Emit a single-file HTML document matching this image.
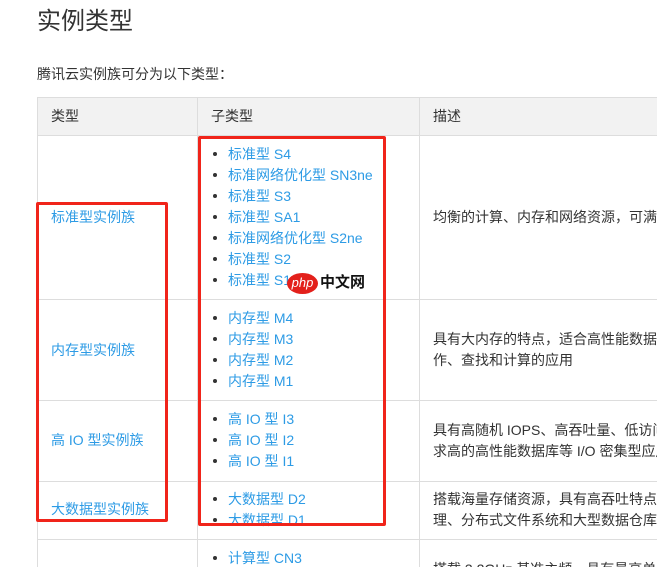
<!DOCTYPE html>
<html><head><meta charset="utf-8"><style>
html{overflow:hidden;width:657px;height:567px}
body{margin:0;width:657px;height:567px;overflow:hidden;background:#fff;font-family:"Liberation Sans","Noto Sans CJK SC",sans-serif;position:relative}
.t{position:absolute;white-space:nowrap;font-size:14px;line-height:16px;transform:translateY(-8px)}
.l{color:#2d9be5}
.d{color:#333}
.b{position:absolute;width:4px;height:4px;border-radius:50%;background:#333}
.hl{position:absolute;height:1px;background:#ddd}
.vl{position:absolute;width:1px;background:#ddd}
.rb{position:absolute;border:3px solid #f0241a;border-radius:2px}
.clip{position:absolute;left:420px;top:0;width:237px;height:567px;overflow:hidden}
.clip .t{left:13px}
</style></head><body>
<div class="t d" style="left:37px;top:22px;font-size:24px;line-height:30px;transform:translateY(-15px)">实例类型</div>
<div class="t d" style="left:37px;top:74px">腾讯云实例族可分为以下类型：</div>
<div style="position:absolute;left:37px;top:97px;width:620px;height:38px;background:#f2f2f2"></div>
<div class="hl" style="left:37px;top:97px;width:620px"></div>
<div class="hl" style="left:37px;top:135px;width:620px"></div>
<div class="hl" style="left:37px;top:299px;width:620px"></div>
<div class="hl" style="left:37px;top:400px;width:620px"></div>
<div class="hl" style="left:37px;top:481px;width:620px"></div>
<div class="hl" style="left:37px;top:539px;width:620px"></div>
<div class="vl" style="left:37px;top:97px;height:470px"></div>
<div class="vl" style="left:197px;top:97px;height:470px"></div>
<div class="vl" style="left:419px;top:97px;height:470px"></div>
<div class="t d" style="left:51px;top:116px">类型</div>
<div class="t d" style="left:211px;top:116px">子类型</div>
<div class="t d" style="left:433px;top:116px">描述</div>

<div class="t l" style="left:51px;top:217px">标准型实例族</div>
<div class="t l" style="left:51px;top:350px">内存型实例族</div>
<div class="t l" style="left:51px;top:440px">高 IO 型实例族</div>
<div class="t l" style="left:51px;top:509px">大数据型实例族</div>

<div class="clip">
<div class="t d" style="top:217px">均衡的计算、内存和网络资源，可满足大多数场景</div>
<div class="t d" style="top:339px">具有大内存的特点，适合高性能数据库、分布式内存缓存</div>
<div class="t d" style="top:360px">作、查找和计算的应用</div>
<div class="t d" style="top:430px">具有高随机 IOPS、高吞吐量、低访问延时等特点</div>
<div class="t d" style="top:451px">求高的高性能数据库等 I/O 密集型应用</div>
<div class="t d" style="top:499px">搭载海量存储资源，具有高吞吐特点，适合 Hadoop</div>
<div class="t d" style="top:520px">理、分布式文件系统和大型数据仓库等吞吐密集型应用</div>
<div class="t d" style="top:569px">搭载 3.2GHz 基准主频，具有最高单核计算性能</div>
</div>

<div class="b" style="left:213px;top:152px"></div><div class="t l" style="left:228px;top:154px">标准型 S4</div>
<div class="b" style="left:213px;top:173px"></div><div class="t l" style="left:228px;top:175px">标准网络优化型 SN3ne</div>
<div class="b" style="left:213px;top:194px"></div><div class="t l" style="left:228px;top:196px">标准型 S3</div>
<div class="b" style="left:213px;top:215px"></div><div class="t l" style="left:228px;top:217px">标准型 SA1</div>
<div class="b" style="left:213px;top:236px"></div><div class="t l" style="left:228px;top:238px">标准网络优化型 S2ne</div>
<div class="b" style="left:213px;top:257px"></div><div class="t l" style="left:228px;top:259px">标准型 S2</div>
<div class="b" style="left:213px;top:278px"></div><div class="t l" style="left:228px;top:280px">标准型 S1</div>

<div class="b" style="left:213px;top:316px"></div><div class="t l" style="left:228px;top:318px">内存型 M4</div>
<div class="b" style="left:213px;top:337px"></div><div class="t l" style="left:228px;top:339px">内存型 M3</div>
<div class="b" style="left:213px;top:358px"></div><div class="t l" style="left:228px;top:360px">内存型 M2</div>
<div class="b" style="left:213px;top:379px"></div><div class="t l" style="left:228px;top:381px">内存型 M1</div>

<div class="b" style="left:213px;top:417px"></div><div class="t l" style="left:228px;top:419px">高 IO 型 I3</div>
<div class="b" style="left:213px;top:438px"></div><div class="t l" style="left:228px;top:440px">高 IO 型 I2</div>
<div class="b" style="left:213px;top:459px"></div><div class="t l" style="left:228px;top:461px">高 IO 型 I1</div>

<div class="b" style="left:213px;top:497px"></div><div class="t l" style="left:228px;top:499px">大数据型 D2</div>
<div class="b" style="left:213px;top:518px"></div><div class="t l" style="left:228px;top:520px">大数据型 D1</div>

<div class="b" style="left:213px;top:556px"></div><div class="t l" style="left:228px;top:558px">计算型 CN3</div>

<div style="position:absolute;left:287px;top:273px;width:31px;height:21px;border-radius:50%;background:#e3201b;color:#fff;font-size:13px;font-style:italic;line-height:19px;text-align:center">php</div>
<div class="t" style="left:320px;top:283px;color:#111;font-weight:bold;font-size:15px">中文网</div>

<div class="rb" style="left:36px;top:202px;width:126px;height:314px"></div>
<div class="rb" style="left:198px;top:136px;width:182px;height:384px"></div>
</body></html>
